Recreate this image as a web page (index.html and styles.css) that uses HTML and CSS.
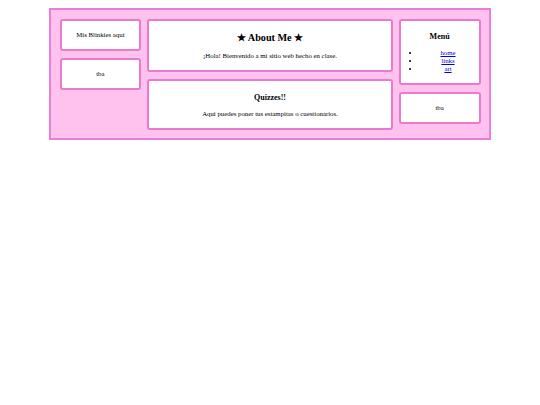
FILE: index.html
```html
<!DOCTYPE html>
<html lang="es">
<head>
<meta charset="utf-8">
<title>Mi sitio</title>
<link rel="stylesheet" href="styles.css">
</head>
<body>
<div class="page">
  <div class="col">
    <div class="box"><p>Mis Blinkies aquí</p></div>
    <div class="box"><p>tba</p></div>
  </div>
  <div class="col">
    <div class="box">
      <h2>★ About Me ★</h2>
      <p>¡Hola! Bienvenido a mi sitio web hecho en clase.</p>
    </div>
    <div class="box">
      <h3>Quizzes!!</h3>
      <p>Aquí puedes poner tus estampitas o cuestionarios.</p>
    </div>
  </div>
  <div class="col">
    <div class="box">
      <h3>Menú</h3>
      <ul class="menu">
        <li><a href="#">home</a></li>
        <li><a href="#">links</a></li>
        <li><a href="#">art</a></li>
      </ul>
    </div>
    <div class="box"><p>tba</p></div>
  </div>
</div>
</body>
</html>
```
FILE: styles.css
```css
body {
  margin: 8px;
  font-family: "Liberation Serif", "Times New Roman", serif;
  font-size: 6.8px;
  color: #000;
  background: #fff;
}
.page {
  box-sizing: border-box;
  width: 442px;
  margin: 0 auto;
  border: 2px solid #e97fd8;
  background: #ffc2ef;
  padding: 8.5px;
  display: grid;
  grid-template-columns: 1fr 3fr 1fr;
  column-gap: 6px;
  align-items: start;
}
.col {
  display: flex;
  flex-direction: column;
  gap: 7.5px;
}
.box {
  background: #fff;
  border: 2px solid #ea7acd;
  border-radius: 3px;
  padding: 4px 3px;
  text-align: center;
}
.box p {
  margin: 6px 0;
  line-height: 8px;
}
.box h2 {
  font-size: 10.2px;
  line-height: 12px;
  margin: 7.5px 0;
}
.box h3 {
  font-size: 8px;
  line-height: 9.5px;
  margin: 7.5px 0;
}
.menu {
  margin: 5.5px 0;
  padding-left: 16.8px;
}
.menu li {
  line-height: 8px;
}
.menu a {
  color: #0000ee;
}
```
